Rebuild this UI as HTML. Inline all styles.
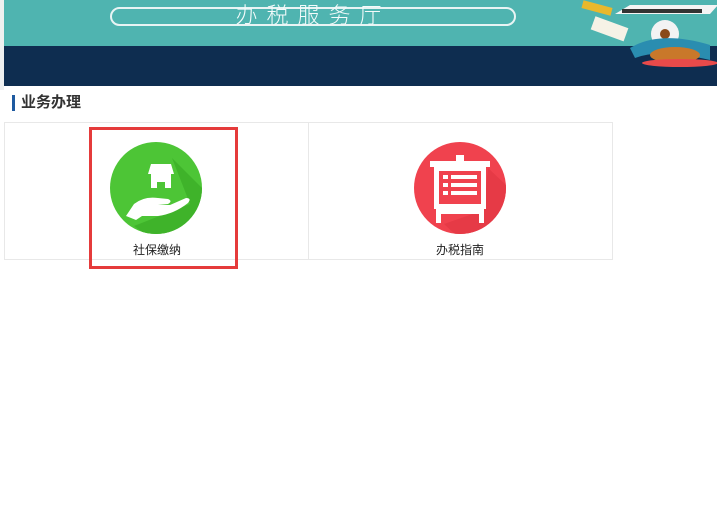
<!DOCTYPE html>
<html><head><meta charset="utf-8"><style>
*{margin:0;padding:0;box-sizing:border-box}
body{width:717px;height:514px;background:#fff;position:relative;overflow:hidden;font-family:"Liberation Sans","Noto Sans CJK SC",sans-serif}
.edge{position:absolute;left:0;top:0;width:4px;height:90px;background:#eef0f0}
.ban{position:absolute;left:4px;top:0;width:713px;height:86px;background:#0e2d50}
.teal{position:absolute;left:0;top:0;width:713px;height:46px;background:#4fb4b0}
.pill{position:absolute;left:106px;top:7px;width:406px;height:19px;border:2px solid #e8f4f4;border-radius:10px}
.ptxt{position:absolute;left:106px;top:3px;width:406px;color:#f4fbfb;font-size:22px;line-height:26px;text-align:center;letter-spacing:9px;font-weight:300}
.title{position:absolute;left:12px;top:95px;height:16px;border-left:3px solid #1e5aa0;padding-left:6px;font-size:15px;font-weight:bold;color:#333;line-height:16px}
.grid{position:absolute;left:4px;top:122px;width:609px;height:138px;border:1px solid #e8e8e8}
.div{position:absolute;left:308px;top:122px;width:1px;height:138px;background:#e8e8e8}
.hl{position:absolute;left:89px;top:127px;width:149px;height:142px;border:3px solid #e53b3b}
.lab{position:absolute;top:241px;font-size:12px;color:#222;width:100px;text-align:center}
</style></head><body>
<div class="edge"></div>
<div class="ban"><div class="teal"></div>
<div class="pill"></div><div class="ptxt">办税服务厅</div>
<svg style="position:absolute;left:556px;top:0" width="157" height="70">
<rect x="22" y="4" width="30" height="8" fill="#e9b82c" transform="rotate(15 37 8)"/>
<path d="M55 14 L150 14 L158 5 L70 5 Z" fill="#f4f4f4"/>
<rect x="62" y="9" width="80" height="4" fill="#333"/>
<rect x="32" y="22" width="35" height="14" fill="#f6f2e6" transform="rotate(20 50 29)"/>
<circle cx="105" cy="34" r="14" fill="#f3f3f3"/><circle cx="105" cy="34" r="5" fill="#8a4a1a"/>
<path d="M70 48 Q100 30 150 45 L150 60 Q100 48 75 58Z" fill="#2a8db0"/>
<ellipse cx="115" cy="55" rx="25" ry="8" fill="#c9782a"/>
<ellipse cx="120" cy="63" rx="38" ry="4" fill="#e84a4a"/>
</svg>
</div>
<div class="title">业务办理</div>
<div class="grid"></div><div class="div"></div>
<svg style="position:absolute;left:110px;top:142px" width="92" height="92" viewBox="0 0 92 92">
<defs><clipPath id="c1"><circle cx="46" cy="46" r="46"/></clipPath></defs>
<circle cx="46" cy="46" r="46" fill="#4dc536"/>
<path d="M62 16 L110 64 L60 110 L24 84 L80 62 Z" fill="#3fb32a" clip-path="url(#c1)"/>
<path d="M41 22 L61 22 L64 32 L61 32 L61 46 L55 46 L55 40 L47 40 L47 46 L41 46 L41 32 L38 32 Z" fill="#fff"/>
<path d="M16 74 L24 62 Q34 54 48 56 L58 57 Q63 59 58 62 L48 63 L60 63 L76 56 Q82 56 78 61 Q64 72 48 74 L32 74 L26 78 Z" fill="#fff"/>
</svg>
<svg style="position:absolute;left:414px;top:142px" width="92" height="92" viewBox="0 0 92 92">
<defs><clipPath id="c2"><circle cx="46" cy="46" r="46"/></clipPath></defs>
<circle cx="46" cy="46" r="46" fill="#f0424e"/>
<path d="M74 26 L110 60 L60 110 L30 82 L70 68Z" fill="#e63a46" clip-path="url(#c2)"/>
<rect x="42" y="13" width="8" height="6" fill="#fff"/>
<rect x="16" y="19" width="60" height="6" fill="#fff"/>
<path d="M20 25 h52 v42 h-52Z M25 29 v33 h42 v-33Z" fill="#fff" fill-rule="evenodd"/>
<rect x="29" y="33" width="5" height="4" fill="#fff"/><rect x="37" y="33" width="26" height="4" fill="#fff"/>
<rect x="29" y="41" width="5" height="4" fill="#fff"/><rect x="37" y="41" width="26" height="4" fill="#fff"/>
<rect x="29" y="49" width="5" height="4" fill="#fff"/><rect x="37" y="49" width="26" height="4" fill="#fff"/>
<path d="M22 67 h48 v14 h-5 v-9 h-38 v9 h-5Z" fill="#fff"/>
</svg>
<div class="lab" style="left:107px">社保缴纳</div>
<div class="lab" style="left:410px">办税指南</div>
<div class="hl"></div>
</body></html>
